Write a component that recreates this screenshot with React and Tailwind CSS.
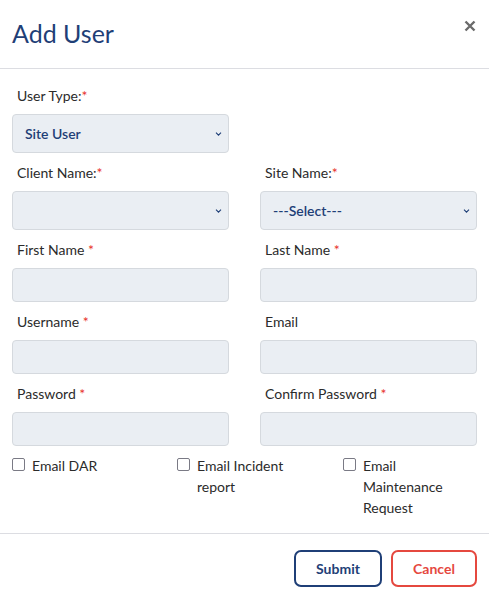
import { useState } from 'react';

const navy = 'text-[#1f3f77]';

function Req() {
  return <span className="text-[#e8322c]">*</span>;
}

function Label({ children, req, spaced }) {
  return (
    <label className="block pl-[5px] mb-2 h-5 leading-5 text-[14px] text-[#2b2b2b]">
      {children}
      {req && (spaced ? <> <Req /></> : <Req />)}
    </label>
  );
}

function Select({ value }) {
  return (
    <div className="relative">
      <select
        defaultValue={value}
        className="appearance-none w-full h-[39px] rounded-[4px] border border-[#d5d9de] bg-[#eaeef3] pl-3 pr-8 text-[14px] font-semibold text-[#1f3f77] outline-none"
      >
        <option value={value}>{value}</option>
      </select>
      <svg
        className="absolute right-[7px] top-1/2 -translate-y-1/2 pointer-events-none"
        width="7"
        height="5"
        viewBox="0 0 7 5"
        fill="none"
      >
        <path d="M1 1.2 L3.5 3.7 L6 1.2" stroke="#1f3f77" strokeWidth="1.1" />
      </svg>
    </div>
  );
}

function Input({ type = 'text' }) {
  return (
    <input
      type={type}
      className="block w-full h-[34px] rounded-[4px] border border-[#d5d9de] bg-[#eaeef3] px-3 text-[14px] outline-none"
    />
  );
}

function Check({ label }) {
  const [on, setOn] = useState(false);
  return (
    <label className="flex items-start gap-[7px] text-[14px] leading-[21px] text-[#2b2b2b]">
      <input
        type="checkbox"
        checked={on}
        onChange={() => setOn(!on)}
        className="appearance-none mt-[3px] w-[13px] h-[13px] shrink-0 rounded-[2px] border-[1.5px] border-[#7a7a85] bg-white"
      />
      <span className="max-w-[112px]">{label}</span>
    </label>
  );
}

export default function App() {
  return (
    <div className="w-[489px] h-[602px] bg-white font-['Lato','Liberation_Sans',sans-serif]">
      <div className="h-[69px] border-b border-[#dcdde2] flex items-start justify-between px-3">
        <h1 className={`mt-[18px] text-[25px] leading-[31px] ${navy}`}>Add User</h1>
        <button className="mt-[20px] mr-[1px] text-[#6b6b6b]">
          <svg width="12" height="12" viewBox="0 0 12 12">
            <path d="M1.5 1.5 L10.5 10.5 M10.5 1.5 L1.5 10.5" stroke="currentColor" strokeWidth="2.4" />
          </svg>
        </button>
      </div>

      <div className="px-3 pt-[17px] pb-[15px] border-b border-[#dcdde2]">
        <div className="grid grid-cols-2 gap-x-[31px] gap-y-[10px]">
          <div>
            <Label req>User Type:</Label>
            <Select value="Site User" />
          </div>
          <div />
          <div>
            <Label req>Client Name:</Label>
            <Select value="" />
          </div>
          <div>
            <Label req>Site Name:</Label>
            <Select value="---Select---" />
          </div>
          <div>
            <Label req spaced>First Name</Label>
            <Input />
          </div>
          <div>
            <Label req spaced>Last Name</Label>
            <Input />
          </div>
          <div>
            <Label req spaced>Username</Label>
            <Input />
          </div>
          <div>
            <Label>Email</Label>
            <Input type="email" />
          </div>
          <div>
            <Label req spaced>Password</Label>
            <Input type="password" />
          </div>
          <div>
            <Label req spaced>Confirm Password</Label>
            <Input type="password" />
          </div>
        </div>

        <div className="grid grid-cols-[165px_166px_1fr] mt-[9px]">
          <Check label="Email DAR" />
          <Check label="Email Incident report" />
          <Check label="Email Maintenance Request" />
        </div>
      </div>

      <div className="flex justify-end gap-[9px] px-3 pt-4">
        <button className="w-[88px] h-[37px] rounded-[7px] border-2 border-[#1f3f77] text-[14px] font-bold text-[#1f3f77]">
          Submit
        </button>
        <button className="w-[86px] h-[37px] rounded-[7px] border-2 border-[#e5483f] text-[14px] font-bold text-[#e5483f]">
          Cancel
        </button>
      </div>
    </div>
  );
}
